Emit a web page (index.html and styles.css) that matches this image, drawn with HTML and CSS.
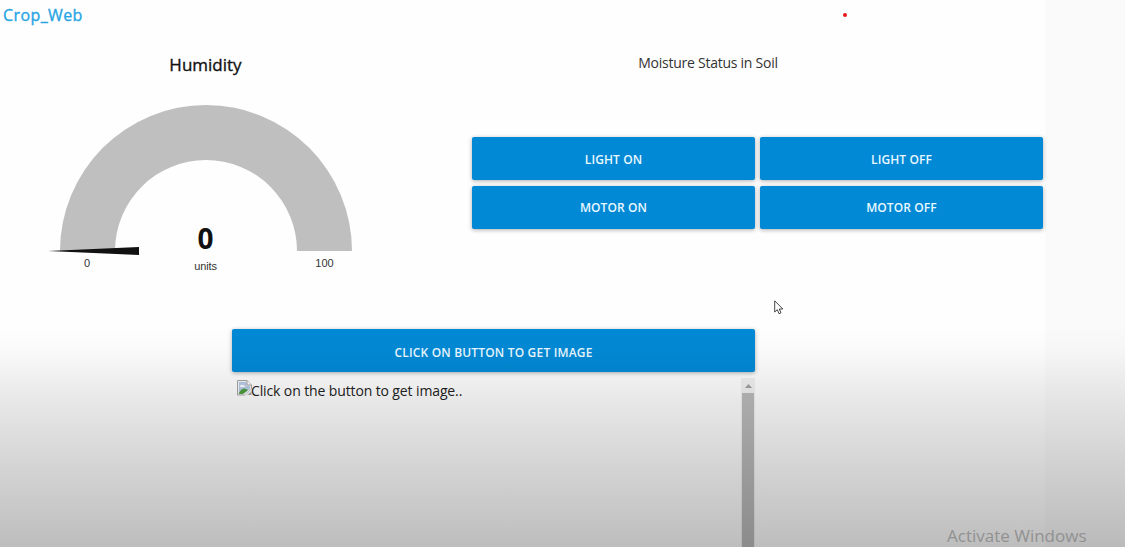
FILE: index.html
```html
<!DOCTYPE html>
<html lang="en">
<head>
<meta charset="utf-8">
<title>Crop_Web</title>
<link rel="stylesheet" href="styles.css">
</head>
<body>
<div class="page">
  <main class="content">
    <header class="brand"><span>Crop_Web</span></header>
    <div class="top">
      <section class="gauge">
        <h2 class="gauge-title"><span>Humidity</span></h2>
        <svg class="gauge-chart" width="411" height="160" viewBox="0 0 411 160">
          <path d="M60 151A146 146 0 0 1 352 151H297A91 91 0 0 0 115 151Z" fill="#bfbfbf"/>
          <path d="M48 151L139 147V155Z" fill="#111"/>
        </svg>
        <div class="readout">
          <span class="min">0</span>
          <span class="value">0</span>
          <span class="units">units</span>
          <span class="max">100</span>
        </div>
      </section>
      <section class="controls">
        <p class="status"><span>Moisture Status in Soil</span></p>
        <div class="buttons">
          <button class="btn">LIGHT ON</button>
          <button class="btn">LIGHT OFF</button>
          <button class="btn">MOTOR ON</button>
          <button class="btn">MOTOR OFF</button>
        </div>
      </section>
    </div>
    <section class="capture">
      <button class="btn wide">CLICK ON BUTTON TO GET IMAGE</button>
      <div class="frame">
        <div class="missing">
          <svg width="15" height="16" viewBox="0 0 15 16">
            <path d="M.5 .5H10L14.5 5V9L8 15H.5Z" fill="#f5f5f5" stroke="#a5a5a5"/>
            <path d="M2 2H9.5V6H13V9L8 13H2Z" fill="#b9cbe8"/>
            <path d="M3 6Q4 4 6 5Q8 5 8 7H3Z" fill="#fff"/>
            <path d="M2 13Q5 7 9 9L11 10L6 14H2Z" fill="#4f9d3c"/>
            <path d="M10 .5V5H14.5" fill="#fff" stroke="#a5a5a5"/>
            <path d="M7 15.5L15 8.5V10.5L10 15.5Z" fill="#eee"/>
            <path d="M10.5 15H14.5V11.5Z" fill="#a5a5a5"/>
          </svg>
          <span class="alt">Click on the button to get image..</span>
        </div>
        <div class="scrollbar">
          <div class="arrow"><svg width="7" height="4" viewBox="0 0 7 4"><path d="M3.5 0L7 4H0Z" fill="#a0a0a0"/></svg></div>
          <div class="thumb"></div>
        </div>
      </div>
    </section>
  </main>
  <div class="shade"></div>
  <span class="dot"></span>
  <svg class="cursor" width="10" height="15" viewBox="0 0 10 15"><path d="M.7 .8V12L3.3 9.7L5 13.7L7 12.8L5.3 9H8.8Z" fill="#fff" stroke="#333" stroke-width=".9"/></svg>
  <span class="watermark">Activate Windows</span>
</div>
</body>
</html>
```
FILE: styles.css
```css
* { box-sizing: border-box; }
body { margin: 0; font-family: "Open Sans", "Noto Sans", sans-serif; color: #111; }
.page { position: relative; width: 1125px; height: 547px; overflow: hidden; background: #fafafa; }
.content { width: 1045px; height: 547px; background: #fefefe; display: flex; flex-direction: column; }
.brand { height: 30px; padding-left: 3px; font-size: 16px; line-height: 30px; letter-spacing: .4px; color: #26a5e4; -webkit-text-stroke: .35px #26a5e4; }
.top { display: flex; height: 299px; }
.gauge { width: 411px; margin-right: 61px; }
.gauge-title { margin: 0; height: 70px; line-height: 70px; text-align: center; font-size: 17px; font-weight: 400; -webkit-text-stroke: .35px #111; }
.gauge-chart { display: block; }
.readout { display: grid; grid-template-columns: 174px 63px 174px; grid-template-rows: 32px 24px; margin-top: -37px; font: 11px "Liberation Sans", sans-serif; text-align: center; color: #333; }
.value { grid-area: 1 / 2; font: bold 28px/30px "Noto Sans", sans-serif; color: #111; }
.units { grid-area: 2 / 2; line-height: 22px; letter-spacing: -.1px; }
.min { grid-area: 2 / 1; line-height: 16px; }
.max { grid-area: 2 / 3; line-height: 16px; padding-left: 1px; }
.controls { width: 572px; }
.status { margin: 0; height: 107px; line-height: 65px; padding-right: 100px; text-align: center; font-size: 14px; letter-spacing: -.25px; color: #333; }
.buttons { display: grid; grid-template-columns: 283px 283px; grid-template-rows: 43px 43px; gap: 6px 5px; }
.btn { border: 0; border-radius: 2px; padding: 0; height: 43px; background: #0289d5; color: #e9f8ff; font: 600 12px/43px "Open Sans", sans-serif; text-align: center; letter-spacing: .1px; box-shadow: 0 1px 4px rgba(0,0,0,.32); }
.wide { letter-spacing: .18px; padding-top: 2px; }
.buttons .btn:nth-child(-n+2) { padding-top: 1px; }
.capture { width: 523px; margin-left: 232px; display: flex; flex-direction: column; }
.frame { display: flex; height: 175px; justify-content: space-between; padding-top: 6px; }
.missing { display: flex; padding: 2px 0 0 5px; font-size: 14px; line-height: 22px; letter-spacing: -.12px; color: #222; }
.missing svg { margin-right: -1px; }
.scrollbar { width: 14px; background: #f0f0f0; }
.arrow { height: 15px; display: flex; align-items: center; justify-content: center; }
.thumb { width: 12px; height: 154px; margin: 0 auto; background: #bbb; }
.shade { position: absolute; inset: 300px 0 0; pointer-events: none; background: linear-gradient(rgba(0,0,0,0) 10%, rgba(0,0,0,.015) 20%, rgba(0,0,0,.085) 40%, rgba(0,0,0,.165) 67%, rgba(0,0,0,.255)); }
.dot { position: absolute; left: 843px; top: 13px; width: 4px; height: 4px; border-radius: 50%; background: #e61919; }
.cursor { position: absolute; left: 774px; top: 300px; }
.watermark { position: absolute; left: 947px; top: 524px; font-size: 17px; line-height: 24px; color: #919191; white-space: nowrap; }
```
